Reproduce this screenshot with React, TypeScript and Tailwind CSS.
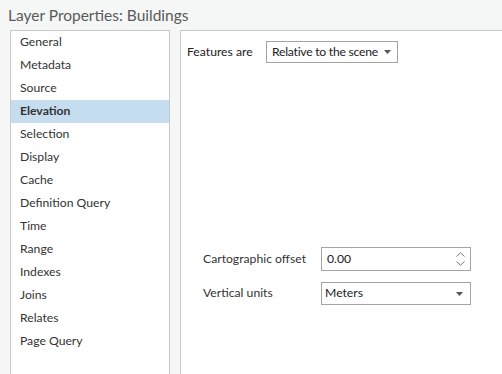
const PAGES = [
  "General",
  "Metadata",
  "Source",
  "Elevation",
  "Selection",
  "Display",
  "Cache",
  "Definition Query",
  "Time",
  "Range",
  "Indexes",
  "Joins",
  "Relates",
  "Page Query",
];

const font = "font-['Lato','Noto_Sans',sans-serif]";

function Caret() {
  return (
    <svg width="7" height="4" viewBox="0 0 7 4" className="shrink-0">
      <path d="M0 0h7L3.5 4z" fill="#555" />
    </svg>
  );
}

function Select({ value }: { value: string }) {
  return (
    <div className="flex h-[22px] w-[132px] items-center justify-between border border-[#a3a3a3] bg-white pl-[5px] pr-[6px] whitespace-nowrap tracking-[-0.25px] text-[#222]">
      <span>{value}</span>
      <Caret />
    </div>
  );
}

export default function App() {
  return (
    <div className={`flex h-[374px] w-[502px] flex-col overflow-hidden bg-[#f5f7f6] ${font}`}>
      <div className="flex h-[30px] items-center pl-[8px] pt-[1px] text-[15.5px] text-[#5a5a5a]">
        Layer Properties: Buildings
      </div>

      <div className="ml-[10px] flex flex-1 gap-[10px]">
        {/* page list */}
        <div className="w-[160px] border-x border-t border-[#c9c9c9] bg-white">
          <ul className="text-[12.2px] text-[#333]">
            {PAGES.map((p) => (
              <li
                key={p}
                className={`flex h-[23px] items-center pl-[9px] ${
                  p === "Elevation" ? "bg-[#c6dcef] font-bold" : ""
                }`}
              >
                {p}
              </li>
            ))}
          </ul>
        </div>

        {/* elevation page */}
        <div className="flex flex-1 flex-col border-l border-t border-[#c9c9c9] bg-white pl-[6px] pt-[10px] text-[12.2px] text-[#222]">
          <div className="flex items-center">
            <span className="w-[79px]">Features are</span>
            <Select value="Relative to the scene" />
          </div>

          <div className="ml-[16px] mt-[184px] flex flex-col gap-[11px]">
            <div className="flex items-center">
              <span className="w-[118px] text-[#333]">Cartographic offset</span>
              <div className="flex h-[24px] w-[150px] items-center justify-between border border-[#a3a3a3] bg-white pl-[5px] pr-[5px]">
                <span>0.00</span>
                <div className="flex flex-col gap-[4px]">
                  <svg width="9" height="5" viewBox="0 0 9 5">
                    <path d="M0.5 4.5L4.5 0.8L8.5 4.5" fill="none" stroke="#777" strokeWidth="1" />
                  </svg>
                  <svg width="9" height="5" viewBox="0 0 9 5">
                    <path d="M0.5 0.5L4.5 4.2L8.5 0.5" fill="none" stroke="#777" strokeWidth="1" />
                  </svg>
                </div>
              </div>
            </div>
            <div className="flex items-center">
              <span className="w-[118px] text-[#333]">Vertical units</span>
              <div className="flex h-[23px] w-[150px] items-center justify-between border border-[#a3a3a3] bg-white pl-[3px] pr-[7px]">
                <span>Meters</span>
                <Caret />
              </div>
            </div>
          </div>
        </div>
      </div>
    </div>
  );
}
